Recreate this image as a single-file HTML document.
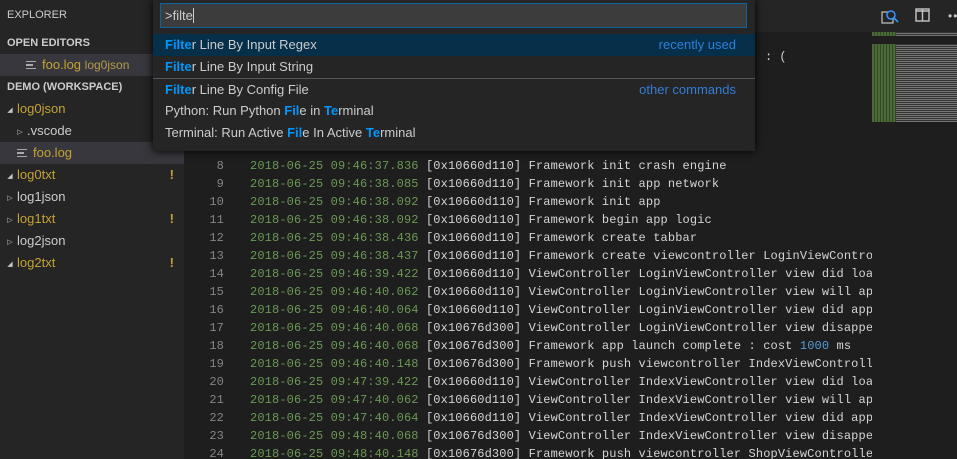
<!DOCTYPE html>
<html><head><meta charset="utf-8"><style>
*{margin:0;padding:0;box-sizing:border-box}
html,body{width:957px;height:459px;overflow:hidden}
body{background:#1e1e1e;font-family:"Liberation Sans",sans-serif;position:relative}
#side{position:absolute;left:0;top:0;width:184px;height:459px;background:#252526;color:#ccc;font-size:13px}
.row{position:absolute;left:0;width:184px;height:22px;line-height:22px;white-space:nowrap}
.hdr{font-weight:bold;font-size:11px;color:#ccc}
.y{color:#c5a332}
.bang{position:absolute;right:10px;color:#c5a332;font-weight:bold}
.tri{display:inline-block;font-size:7px;color:#c5c5c5;width:14px;text-align:center;vertical-align:1px}
.fi{display:inline-block;width:10px;height:8px;border-top:1.5px solid #aaa;border-bottom:1.5px solid #aaa;position:relative;margin-right:6px;vertical-align:0}
.fi:after{content:"";position:absolute;left:0;top:2px;width:7px;height:1.5px;background:#aaa}
#tabs{position:absolute;left:184px;top:0;width:773px;height:32px;background:#252526}
#code{position:absolute;left:184px;top:157px;width:688px;height:302px;overflow:hidden;font-family:"Liberation Mono",monospace;font-size:12px;letter-spacing:0.13px;color:#d4d4d4}
.l{height:18px;line-height:18px;white-space:pre}
.n{display:inline-block;width:40px;text-align:right;color:#858585;margin-right:26px}
.g{color:#6a9955}
.b{color:#569cd6}
#qp{position:absolute;left:153px;top:0;width:602px;height:151px;background:#252526;box-shadow:0 0 8px #000;font-size:13px;color:#ccc}
#inp{position:absolute;left:7px;top:3px;width:587px;height:25px;background:#3c3c3c;border:1px solid #0e639c;color:#ccc;font-size:13px;line-height:23px;padding-left:4px}
.q{position:absolute;left:0;width:602px;height:22px;line-height:22px;padding-left:12px}
.h{color:#0097fb;font-weight:bold}
.r{position:absolute;right:19px;color:#3794ff;opacity:.8}
#mini{position:absolute;left:872px;top:32px;width:85px;height:90px}
</style></head><body>
<div id="side">
<div class="row" style="top:4px;padding-left:7px;font-size:11px">EXPLORER</div>
<div class="row hdr" style="top:32px;padding-left:7px">OPEN EDITORS</div>
<div class="row" style="top:54px;background:#37373d;padding-left:26px"><span class="fi"></span><span class="y">foo.log</span> <span style="color:#b39a4b;font-size:12px">log0json</span></div>
<div class="row hdr" style="top:76px;padding-left:7px">DEMO (WORKSPACE)</div>
<div class="row" style="top:98px;padding-left:3px"><span class="tri">◢</span><span class="y">log0json</span></div>
<div class="row" style="top:120px;padding-left:13px"><span class="tri">▷</span>.vscode</div>
<div class="row" style="top:142px;background:#37373d;padding-left:17px"><span class="fi"></span><span class="y">foo.log</span></div>
<div class="row" style="top:164px;padding-left:3px"><span class="tri">◢</span><span class="y">log0txt</span><span class="bang">!</span></div>
<div class="row" style="top:186px;padding-left:3px"><span class="tri">▷</span>log1json</div>
<div class="row" style="top:208px;padding-left:3px"><span class="tri">▷</span><span class="y">log1txt</span><span class="bang">!</span></div>
<div class="row" style="top:230px;padding-left:3px"><span class="tri">▷</span>log2json</div>
<div class="row" style="top:252px;padding-left:3px"><span class="tri">◢</span><span class="y">log2txt</span><span class="bang">!</span></div>
</div>
<div id="tabs">
<svg style="position:absolute;left:697px;top:8px" width="18" height="17"><rect x="1" y="4" width="11" height="11" fill="none" stroke="#c5c5c5" stroke-width="1.2"/><circle cx="10" cy="7" r="4" fill="#252526" stroke="#3794ff" stroke-width="1.5"/><path d="M13 10l4 4" stroke="#3794ff" stroke-width="1.8"/></svg>
<svg style="position:absolute;left:731px;top:8px" width="15" height="14"><rect x="1" y="1" width="13" height="12" fill="none" stroke="#c5c5c5" stroke-width="1.4"/><path d="M7.5 1v12M1 3h13" stroke="#c5c5c5" stroke-width="1.4"/></svg>
<div style="position:absolute;left:764px;top:9px;color:#c5c5c5;font-size:12px;letter-spacing:1px">••</div>
</div>
<div style="position:absolute;left:765px;top:50px;color:#d4d4d4;font-family:'Liberation Mono',monospace;font-size:12px">: (</div>
<div id="mini">
<div style="position:absolute;left:0;top:0;width:24px;height:90px;background:repeating-linear-gradient(90deg,#4a6b35 0 2px,#33472a 2px 3px)"></div>
<div style="position:absolute;left:24px;top:0;width:61px;height:90px;background:repeating-linear-gradient(0deg,#8a8a8a 0 1px,#3a3a3a 1px 2px);opacity:.8"></div>
<div style="position:absolute;left:0;top:4px;width:85px;height:8px;background:#1e1e1e"></div>
</div>
<div id="code"><div class="l"><span class="n">8</span><span class="g">2018-06-25 09:46:37.836</span> [0x10660d110] Framework init crash engine</div><div class="l"><span class="n">9</span><span class="g">2018-06-25 09:46:38.085</span> [0x10660d110] Framework init app network</div><div class="l"><span class="n">10</span><span class="g">2018-06-25 09:46:38.092</span> [0x10660d110] Framework init app</div><div class="l"><span class="n">11</span><span class="g">2018-06-25 09:46:38.092</span> [0x10660d110] Framework begin app logic</div><div class="l"><span class="n">12</span><span class="g">2018-06-25 09:46:38.436</span> [0x10660d110] Framework create tabbar</div><div class="l"><span class="n">13</span><span class="g">2018-06-25 09:46:38.437</span> [0x10660d110] Framework create viewcontroller LoginViewControl</div><div class="l"><span class="n">14</span><span class="g">2018-06-25 09:46:39.422</span> [0x10660d110] ViewController LoginViewController view did load</div><div class="l"><span class="n">15</span><span class="g">2018-06-25 09:46:40.062</span> [0x10660d110] ViewController LoginViewController view will app</div><div class="l"><span class="n">16</span><span class="g">2018-06-25 09:46:40.064</span> [0x10660d110] ViewController LoginViewController view did appe</div><div class="l"><span class="n">17</span><span class="g">2018-06-25 09:46:40.068</span> [0x10676d300] ViewController LoginViewController view disappea</div><div class="l"><span class="n">18</span><span class="g">2018-06-25 09:46:40.068</span> [0x10676d300] Framework app launch complete : cost <span class="b">1000</span> ms</div><div class="l"><span class="n">19</span><span class="g">2018-06-25 09:46:40.148</span> [0x10676d300] Framework push viewcontroller IndexViewControlle</div><div class="l"><span class="n">20</span><span class="g">2018-06-25 09:47:39.422</span> [0x10660d110] ViewController IndexViewController view did load</div><div class="l"><span class="n">21</span><span class="g">2018-06-25 09:47:40.062</span> [0x10660d110] ViewController IndexViewController view will app</div><div class="l"><span class="n">22</span><span class="g">2018-06-25 09:47:40.064</span> [0x10660d110] ViewController IndexViewController view did appe</div><div class="l"><span class="n">23</span><span class="g">2018-06-25 09:48:40.068</span> [0x10676d300] ViewController IndexViewController view disappea</div><div class="l"><span class="n">24</span><span class="g">2018-06-25 09:48:40.148</span> [0x10676d300] Framework push viewcontroller ShopViewController</div></div>
<div id="qp">
<div id="inp">&gt;filte<span style="border-left:1px solid #ccc"></span></div>
<div class="q" style="top:34px;background:#062f4a"><span class="h">Filte</span>r Line By Input Regex<span class="r">recently used</span></div>
<div class="q" style="top:56px"><span class="h">Filte</span>r Line By Input String</div>
<div style="position:absolute;left:0;top:78px;width:602px;height:1px;background:#555"></div>
<div class="q" style="top:79px"><span class="h">Filte</span>r Line By Config File<span class="r">other commands</span></div>
<div class="q" style="top:100px">Python: Run Python <span class="h">Fil</span>e in <span class="h">Te</span>rminal</div>
<div class="q" style="top:122px">Terminal: Run Active <span class="h">Fil</span>e In Active <span class="h">Te</span>rminal</div>
</div>
</body></html>
